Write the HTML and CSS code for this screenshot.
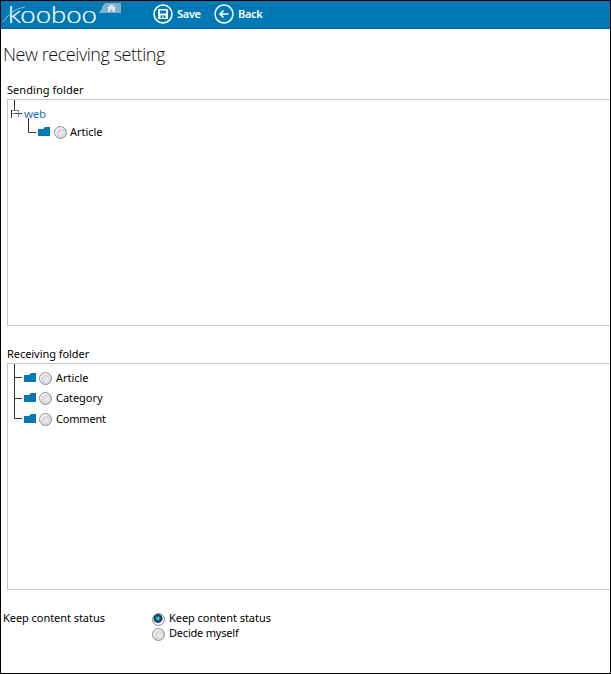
FILE: index.html
```html
<!DOCTYPE html>
<html lang="en">
<head>
<meta charset="utf-8">
<title>New receiving setting</title>
<link rel="stylesheet" href="styles.css">
</head>
<body>
<svg class="defs" aria-hidden="true">
  <symbol id="folder" viewBox="0 0 12 10"><path d="M0 2H5L7 0H12V9H0Z" fill="#0579b3"/></symbol>
</svg>
<div class="page">
  <header class="bar">
    <svg class="logo" viewBox="0 0 128 27">
      <text class="logo-text" x="7" y="22" textLength="89" lengthAdjust="spacingAndGlyphs">kooboo</text>
      <path d="M2 21C6 15 13 8 24 6" fill="none" stroke="#8bc5e0" stroke-width="1"/>
      <path d="M97 12C101 11 101 2 105 2H120V12Z" fill="#80afc9"/>
      <path d="M106 7L110.500 3L115 7H114V11H111.500V8.500H109.500V11H107V7Z" fill="#d9e7ef"/>
    </svg>
    <a class="action save"><svg class="round" viewBox="0 0 20 20"><circle cx="10" cy="10" r="9" fill="none" stroke="#fff" stroke-width="1.500"/><path d="M5 5H14L15 6V15H5ZM7 6.500V9.500H13V6.500ZM7.500 11.500V14H9V12.500H10.500V14H12.500V11.500Z" fill="#fff" fill-rule="evenodd"/></svg><span>Save</span></a>
    <a class="action"><svg class="round" viewBox="0 0 20 20"><circle cx="10" cy="10" r="9" fill="none" stroke="#fff" stroke-width="1.500"/><path d="M14.500 10H6M9.500 6.500L6 10L9.500 13.500" fill="none" stroke="#fff" stroke-width="1.700"/></svg><span>Back</span></a>
  </header>
  <h1><span>New receiving setting</span></h1>
  <div class="label sending-label">Sending folder</div>
  <section class="box sending">
    <svg class="branches" viewBox="0 0 40 40"><path d="M6.500 0V10M3.500 10V18M7 13.500H14M20.500 18V32.500H28" fill="none" stroke="#333"/><path d="M4 10.500H11M4 13.500H7M10.500 10V17" fill="none" stroke="#888"/></svg>
    <div class="web">web</div>
    <label class="row child"><svg class="folder"><use href="#folder"/></svg><i class="radio"></i><span>Article</span></label>
  </section>
  <div class="label second">Receiving folder</div>
  <section class="box receiving">
    <svg class="branches tall" viewBox="0 0 40 60"><path d="M6.500 0V54.500H14M6 13.500H14M6 34.500H14" fill="none" stroke="#333"/></svg>
    <label class="row"><svg class="folder"><use href="#folder"/></svg><i class="radio"></i><span>Article</span></label>
    <label class="row"><svg class="folder"><use href="#folder"/></svg><i class="radio"></i><span>Category</span></label>
    <label class="row"><svg class="folder"><use href="#folder"/></svg><i class="radio"></i><span class="comment">Comment</span></label>
  </section>
  <div class="status">
    <div class="status-label">Keep content status</div>
    <div class="options">
      <label class="option"><i class="radio on"></i><span>Keep content status</span></label>
      <label class="option"><i class="radio"></i><span class="decide">Decide myself</span></label>
    </div>
  </div>
</div>
</body>
</html>
```
FILE: styles.css
```css
* { box-sizing: border-box; }
body { margin: 0; background: #fff; color: #000; font: 11px/15px "Noto Sans", "Open Sans", sans-serif; letter-spacing: -0.050px; }
.defs { position: absolute; width: 0; height: 0; }
.page { width: 611px; height: 674px; border: 1px solid #000; overflow: hidden; }
.bar { display: flex; height: 28px; background: #0078b3; border-bottom: 1px solid #006699; color: #fff; font-weight: 600; letter-spacing: -0.300px; }
.bar span { padding-bottom: 1px; }
.logo { width: 128px; height: 27px; flex: none; margin-right: 24px; }
.logo-text { font: 300 23px Lato, sans-serif; fill: #fff; stroke: #fff; stroke-width: 0.200px; letter-spacing: 0; }
.action { display: flex; align-items: center; height: 26px; gap: 4px; }
.save { width: 61px; }
.round { width: 20px; height: 20px; flex: none; }
h1 { margin: 13px 0 0 2px; height: 24px; font: 300 18px/24px "Open Sans", sans-serif; letter-spacing: -0.450px; color: #111; }
.label { height: 15px; margin-left: 6px; }
.sending-label { margin-top: 16px; letter-spacing: 0.050px; }
.box { position: relative; height: 227px; margin: 2px 0 0 6px; border: 1px solid #c8c8c8; border-right: 0; }
.branches { position: absolute; left: 0; top: 0; width: 40px; height: 40px; }
.tall { height: 60px; }
.web { margin: 6px 0 1px 16px; height: 15px; color: #1f76b5; font-size: 11.500px; letter-spacing: -0.250px; }
.row { display: flex; align-items: center; height: 20.500px; margin-left: 16px; }
.row span { padding-bottom: 2px; }
.child .folder { margin-bottom: 1px; }
.child { margin-left: 30px; }
.child .radio { margin-left: 1px; margin-right: 3px; }
.receiving { padding-top: 4px; }
.receiving .folder { margin-bottom: 1px; }
.folder { width: 12px; height: 10px; margin-right: 3px; }
.radio { width: 13px; height: 13px; flex: none; border: 1px solid #8a8f94; border-radius: 50%; background: radial-gradient(circle at 60% 60%, #f2f2f2 0, #d2d4d6 48%, #f4f4f4 60%); margin-right: 4px; }
.on { background: radial-gradient(circle at 45% 40%, #a9e5ff 0, #16749f 22%, #082f4b 43%, #eee 55%); }
.comment { letter-spacing: -0.200px; }
.decide { letter-spacing: -0.200px; }
.second { margin-top: 20px; }
.status { display: flex; margin: 20px 0 0 2px; }
.status-label { width: 149px; }
.option { display: flex; height: 15px; }
.option .radio { margin-top: 3px; }
```
